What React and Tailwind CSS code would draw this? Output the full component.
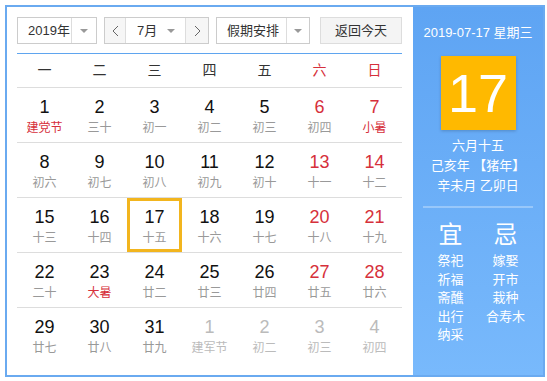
import React from 'react';

const weekdays = [
  { t: '一' }, { t: '二' }, { t: '三' }, { t: '四' }, { t: '五' },
  { t: '六', red: true }, { t: '日', red: true },
];

const rows = [
  [
    { d: 1, l: '建党节', lr: true }, { d: 2, l: '三十' }, { d: 3, l: '初一' }, { d: 4, l: '初二' },
    { d: 5, l: '初三' }, { d: 6, l: '初四', r: true }, { d: 7, l: '小暑', r: true, lr: true },
  ],
  [
    { d: 8, l: '初六' }, { d: 9, l: '初七' }, { d: 10, l: '初八' }, { d: 11, l: '初九' },
    { d: 12, l: '初十' }, { d: 13, l: '十一', r: true }, { d: 14, l: '十二', r: true },
  ],
  [
    { d: 15, l: '十三' }, { d: 16, l: '十四' }, { d: 17, l: '十五', sel: true }, { d: 18, l: '十六' },
    { d: 19, l: '十七' }, { d: 20, l: '十八', r: true }, { d: 21, l: '十九', r: true },
  ],
  [
    { d: 22, l: '二十' }, { d: 23, l: '大暑', lr: true }, { d: 24, l: '廿二' }, { d: 25, l: '廿三' },
    { d: 26, l: '廿四' }, { d: 27, l: '廿五', r: true }, { d: 28, l: '廿六', r: true },
  ],
  [
    { d: 29, l: '廿七' }, { d: 30, l: '廿八' }, { d: 31, l: '廿九' }, { d: 1, l: '建军节', g: true },
    { d: 2, l: '初二', g: true }, { d: 3, l: '初三', g: true }, { d: 4, l: '初四', g: true },
  ],
];

const yi = ['祭祀', '祈福', '斋醮', '出行', '纳采'];
const ji = ['嫁娶', '开市', '栽种', '合寿木'];

function Caret() {
  return <span className="w-0 h-0 border-l-[4px] border-r-[4px] border-t-[4px] border-l-transparent border-r-transparent border-t-[#999]" />;
}

function Chevron({ left }) {
  return (
    <svg width="7" height="12" viewBox="0 0 7 12" fill="none" stroke="#666" strokeWidth="1">
      <path d={left ? 'M6 1 L1 6 L6 11' : 'M1 1 L6 6 L1 11'} />
    </svg>
  );
}

function Cell({ c }) {
  const numColor = c.g ? 'text-[#bbb]' : c.r ? 'text-[#d6303b]' : 'text-[#111]';
  const lunarColor = c.g ? 'text-[#bbb]' : c.lr ? 'text-[#d6303b]' : 'text-[#999]';
  return (
    <div className={`h-[54px] flex flex-col items-center ${c.sel ? 'border-[3px] border-[#f2b51e] pt-[5px]' : 'pt-[8px]'}`}>
      <span className={`text-[18px] leading-[22px] ${numColor}`}>{c.d}</span>
      <span className={`text-[12px] leading-[16px] mt-[2px] ${lunarColor}`}>{c.l}</span>
    </div>
  );
}

export default function App() {
  return (
    <div className="w-[547px] h-[381px] bg-white pt-[5px] pl-[5px] font-['Liberation_Sans','Noto_Sans_CJK_SC',sans-serif]">
      <div className="w-[540px] h-[372px] border-2 border-[#6aaaf0] flex">
        <div className="w-[406px] pl-[10px] pr-[11px] pt-[10px]">
          <div className="flex h-[27px] text-[13px] text-[#333]">
            <div className="w-[80px] border border-[#ccc] flex">
              <div className="flex-1 flex items-center pl-[10px]">2019年</div>
              <div className="w-[25px] border-l border-[#ddd] flex items-center justify-center"><Caret /></div>
            </div>
            <div className="ml-[7px] w-[105px] border border-[#ccc] flex">
              <div className="w-[20px] bg-[#f6f6f6] flex items-center justify-center"><Chevron left /></div>
              <div className="flex-1 border-l border-r border-[#ddd] flex items-center pl-[11px]">
                <span className="flex-1">7月</span>
                <span className="mr-[10px] flex"><Caret /></span>
              </div>
              <div className="w-[22px] bg-[#f6f6f6] flex items-center justify-center"><Chevron /></div>
            </div>
            <div className="ml-[7px] w-[94px] border border-[#ccc] flex">
              <div className="flex-1 flex items-center pl-[10px]">假期安排</div>
              <div className="w-[23px] border-l border-[#ddd] flex items-center justify-center"><Caret /></div>
            </div>
            <div className="ml-[10px] w-[82px] border border-[#ddd] bg-[#f4f4f4] flex items-center justify-center">返回今天</div>
          </div>
          <div className="mt-[9px] h-[1px] bg-[#5fa5ef]" />
          <div className="grid grid-cols-7 h-[34px] border-b border-[#ddd] text-[14px]">
            {weekdays.map((w) => (
              <div key={w.t} className={`flex items-center justify-center ${w.red ? 'text-[#d6303b]' : 'text-[#333]'}`}>{w.t}</div>
            ))}
          </div>
          {rows.map((row, i) => (
            <div key={i} className={`grid grid-cols-7 ${i < rows.length - 1 ? 'border-b border-[#ddd]' : ''}`}>
              {row.map((c, j) => <Cell key={j} c={c} />)}
            </div>
          ))}
        </div>
        <div className="flex-1 bg-gradient-to-b from-[#5ea4f3] to-[#78b9fc] flex flex-col items-center text-white">
          <div className="mt-[17px] text-[13px] leading-[18px]">2019-07-17 星期三</div>
          <div className="mt-[14px] w-[75px] h-[74px] bg-[#ffb900] shadow-[0_1px_3px_rgba(0,0,0,0.2)] flex items-center justify-center text-[54px] leading-none">17</div>
          <div className="mt-[6px] text-[13px] leading-[20px] text-center">
            <div>六月十五</div>
            <div>己亥年 【猪年】</div>
            <div>辛未月 乙卯日</div>
          </div>
          <div className="mt-[10px] w-[110px] h-[2px] bg-white/30" />
          <div className="mt-[10px] w-[110px] grid grid-cols-2">
            <div className="flex flex-col items-center">
              <div className="text-[24px] leading-[30px] font-['Noto_Sans_CJK_SC',sans-serif]">宜</div>
              <div className="text-[13px] leading-[18.5px] mt-[4px] flex flex-col items-center">
                {yi.map((t) => <span key={t}>{t}</span>)}
              </div>
            </div>
            <div className="flex flex-col items-center">
              <div className="text-[24px] leading-[30px] font-['Noto_Sans_CJK_SC',sans-serif]">忌</div>
              <div className="text-[13px] leading-[18.5px] mt-[4px] flex flex-col items-center">
                {ji.map((t) => <span key={t}>{t}</span>)}
              </div>
            </div>
          </div>
        </div>
      </div>
    </div>
  );
}
